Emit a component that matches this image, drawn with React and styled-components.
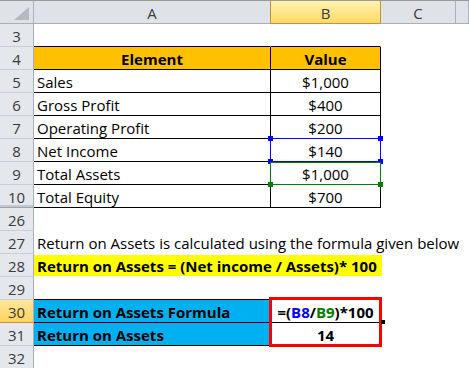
import React from "react";
import styled, { createGlobalStyle, css } from "styled-components";

const Global = createGlobalStyle`
  html, body { margin: 0; padding: 0; background: #ffffff; }
  body { font-family: "Open Sans", "Liberation Sans", sans-serif; overflow: hidden; }
`;

const FONT = `"Open Sans", "Liberation Sans", sans-serif`;
const GRID_LINE = "#c9ced5";
const HEAD_LINE = "#a9b0b8";

const Sheet = styled.div`
  display: grid;
  grid-template-columns: 34px 237px 110px 75px 1fr;
  grid-template-rows: 24px;
  grid-auto-rows: 23px;
  width: 469px;
  height: 368px;
  overflow: hidden;
  font-family: ${FONT};
  font-size: 15px;
  color: #000;
`;

const Corner = styled.div`
  box-sizing: border-box;
  background: #dfe3e8;
  border-top: 1px solid #9a9a9a;
  border-bottom: 1px solid ${HEAD_LINE};
  border-right: 1px solid ${HEAD_LINE};
  display: flex;
  align-items: flex-end;
  justify-content: flex-end;
  padding: 0 4px 3px 0;
`;

const ColHeader = styled.div`
  box-sizing: border-box;
  border-top: 1px solid #9a9a9a;
  border-bottom: 1px solid ${HEAD_LINE};
  border-right: 1px solid ${HEAD_LINE};
  background: #dfe3e8;
  color: #3b3b3b;
  display: flex;
  align-items: center;
  justify-content: center;
  font-size: 15px;
  padding-top: 1px;
  ${(p) =>
    p.$active &&
    css`
      background: linear-gradient(#fff3b0, #ffd966);
      border-bottom-color: #c4923a;
      border-right-color: #c4923a;
      border-left: 1px solid #c4923a;
      margin-left: -1px;
    `}
`;

const RowHeader = styled.div`
  box-sizing: border-box;
  background: #e4e7eb;
  border-right: 1px solid ${HEAD_LINE};
  border-bottom: 1px solid ${GRID_LINE};
  color: #3b3b3b;
  display: flex;
  align-items: center;
  justify-content: center;
  font-size: 15px;
  padding-top: 1px;
  ${(p) =>
    p.$active &&
    css`
      background: linear-gradient(#ffe79a, #ffd35c);
      border-bottom-color: #c4923a;
    `}
  ${(p) =>
    p.$hiddenBelow &&
    css`
      border-bottom-color: #9da5ae;
      box-shadow: inset 0 -2px 0 #c2c8cf;
    `}
`;

const Cell = styled.div`
  box-sizing: border-box;
  position: relative;
  display: flex;
  align-items: center;
  justify-content: ${(p) => (p.$center ? "center" : "flex-start")};
  padding: 1px 3px 0;
  white-space: nowrap;
  background: ${(p) => p.$fill || "#ffffff"};
  font-weight: ${(p) => (p.$bold ? 700 : 400)};
  border-bottom: 1px solid ${(p) => (p.$bottom ? "#000" : p.$fill || "#fff")};
  border-right: 1px solid ${(p) => (p.$right ? "#000" : p.$fill || "#fff")};
  overflow: visible;
  z-index: ${(p) => (p.$front ? 2 : 1)};
`;

const Highlight = styled.span`
  position: absolute;
  left: 0;
  top: 1px;
  height: 21px;
  display: flex;
  align-items: center;
  padding: 1px 5px 0 3px;
  box-sizing: border-box;
  background: #ffff00;
  font-weight: 700;
`;

const Selection = styled.div`
  position: absolute;
  top: -1px;
  left: -1px;
  right: -1px;
  bottom: -1px;
  border: 1px solid ${(p) => p.$color};
  pointer-events: none;
  z-index: 3;
`;

const Handle = styled.i`
  position: absolute;
  width: 5px;
  height: 5px;
  background: ${(p) => p.$color};
  ${(p) => (p.$top ? "top: -3px;" : "bottom: -3px;")}
  ${(p) => (p.$left ? "left: -3px;" : "right: -3px;")}
`;

const RedBox = styled.div`
  position: absolute;
  left: -2px;
  right: -2px;
  top: -3px;
  bottom: -25px;
  border: 3px solid #ff0000;
  z-index: 4;
`;

const FillHandle = styled.i`
  position: absolute;
  left: 110px;
  top: 20px;
  width: 4px;
  height: 4px;
  background: #000;
  z-index: 5;
`;

const Ref = styled.span`
  color: ${(p) => p.$color};
`;

const CornerTriangle = () => (
  <svg width="15" height="13" viewBox="0 0 15 13">
    <polygon points="15,0 15,13 0,13" fill="#b5bac0" />
  </svg>
);

const tableRows = [
  ["5", "Sales", "$1,000"],
  ["6", "Gross Profit", "$400"],
  ["7", "Operating Profit", "$200"],
  ["8", "Net Income", "$140", "blue"],
  ["9", "Total Assets", "$1,000", "green"],
  ["10", "Total Equity", "$700"],
];

const Empty = ({ n, bottomAB }) => (
  <>
    <RowHeader>{n}</RowHeader>
    <Cell $bottom={bottomAB} />
    <Cell $bottom={bottomAB} />
    <Cell />
    <Cell />
  </>
);

export default function App() {
  return (
    <>
      <Global />
      <Sheet>
        <Corner>
          <CornerTriangle />
        </Corner>
        <ColHeader>A</ColHeader>
        <ColHeader $active>B</ColHeader>
        <ColHeader>C</ColHeader>
        <ColHeader />

        <Empty n="3" bottomAB />

        <RowHeader>4</RowHeader>
        <Cell $fill="#ffc000" $bold $center $bottom $right>
          Element
        </Cell>
        <Cell $fill="#ffc000" $bold $center $bottom $right>
          Value
        </Cell>
        <Cell />
        <Cell />

        {tableRows.map(([n, a, b, sel]) => (
          <React.Fragment key={n}>
            <RowHeader $hiddenBelow={n === "10"}>{n}</RowHeader>
            <Cell $bottom $right>
              {a}
            </Cell>
            <Cell $center $bottom $right $front={!!sel}>
              {b}
              {sel === "blue" && (
                <Selection $color="#0000ff">
                  <Handle $top $left $color="#0000ff" />
                  <Handle $top $color="#0000ff" />
                  <Handle $left $color="#0000ff" />
                  <Handle $color="#0000ff" />
                </Selection>
              )}
              {sel === "green" && (
                <Selection $color="#008000" style={{ top: 0 }}>
                  <Handle $left $color="#008000" />
                  <Handle $color="#008000" />
                </Selection>
              )}
            </Cell>
            <Cell />
            <Cell />
          </React.Fragment>
        ))}

        <Empty n="26" />

        <RowHeader>27</RowHeader>
        <Cell $front>Return on Assets is calculated using the formula given below</Cell>
        <Cell />
        <Cell />
        <Cell />

        <RowHeader>28</RowHeader>
        <Cell $front>
          <Highlight>Return on Assets = (Net income / Assets)* 100</Highlight>
        </Cell>
        <Cell />
        <Cell />
        <Cell />

        <Empty n="29" bottomAB />

        <RowHeader $active>30</RowHeader>
        <Cell $fill="#00b0f0" $bold $bottom $right>
          Return on Assets Formula
        </Cell>
        <Cell $bold $center $bottom $right $front>
          =(<Ref $color="#0000ff">B8</Ref>/<Ref $color="#008000">B9</Ref>)*100
          <RedBox />
          <FillHandle />
        </Cell>
        <Cell />
        <Cell />

        <RowHeader>31</RowHeader>
        <Cell $fill="#00b0f0" $bold $bottom $right>
          Return on Assets
        </Cell>
        <Cell $bold $center $bottom $right>
          14
        </Cell>
        <Cell />
        <Cell />

        <Empty n="32" />
      </Sheet>
    </>
  );
}
